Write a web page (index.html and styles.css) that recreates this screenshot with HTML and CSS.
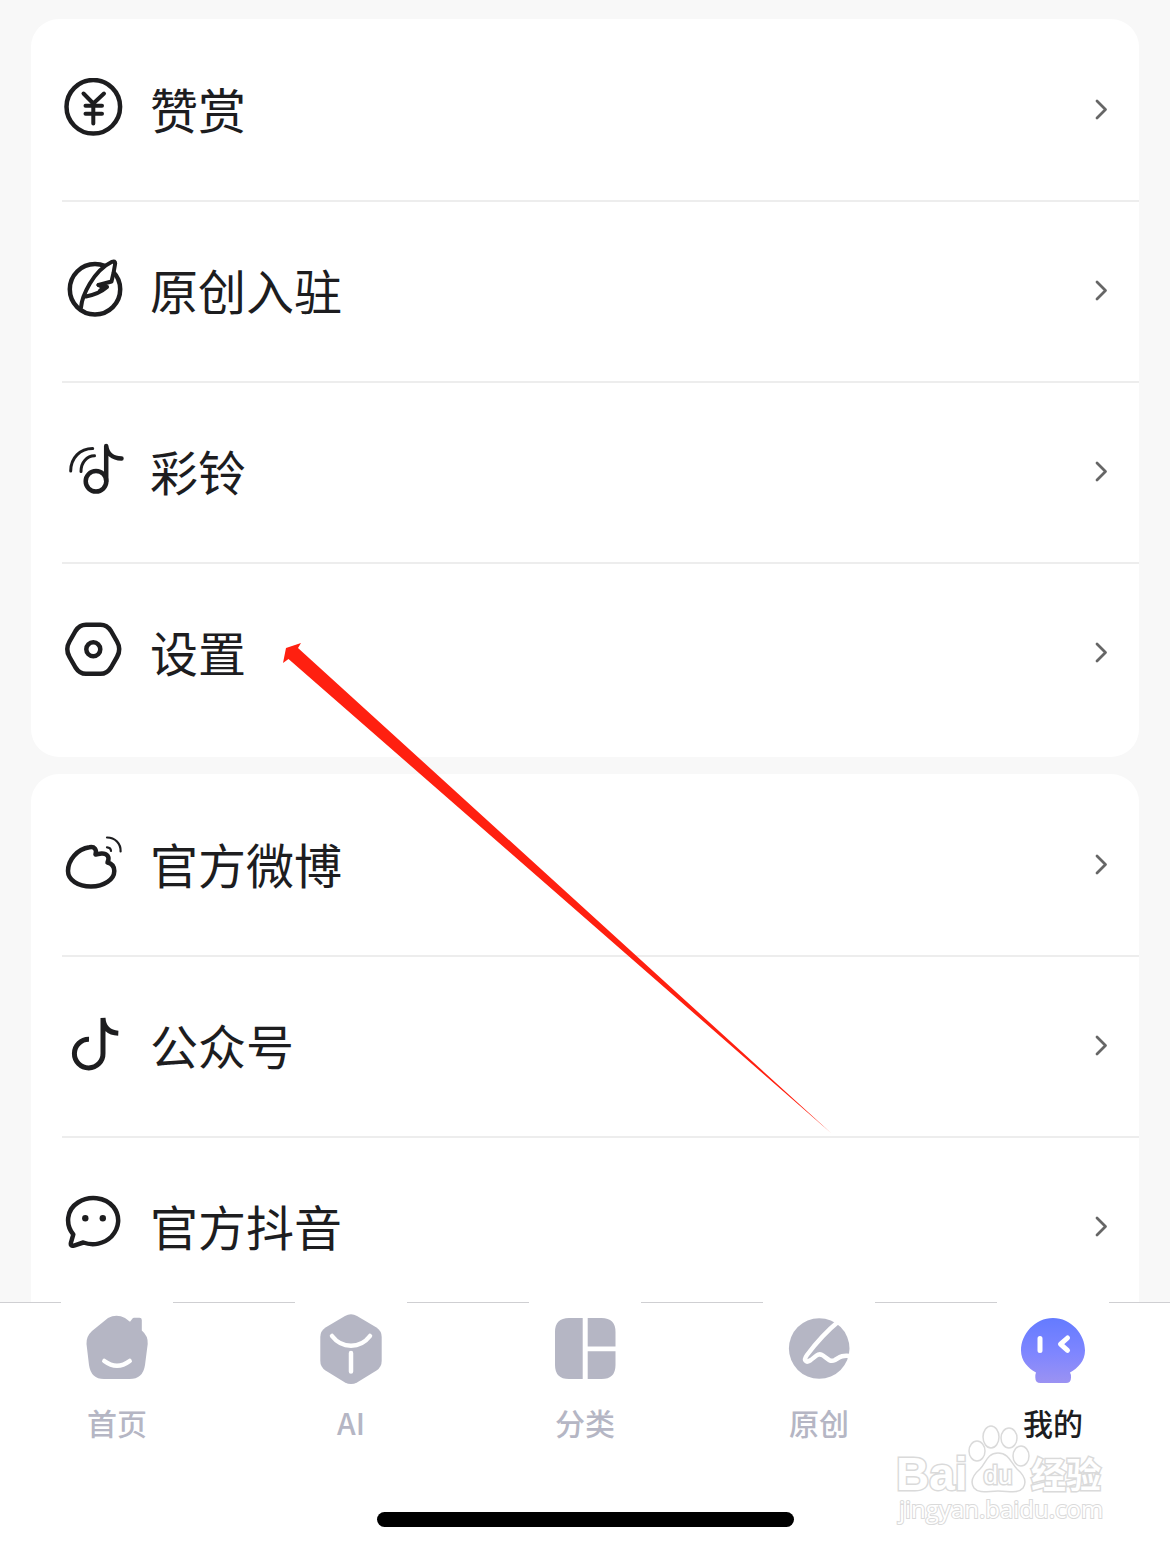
FILE: index.html
```html
<!DOCTYPE html>
<html lang="zh-CN">
<head>
<meta charset="utf-8">
<meta name="viewport" content="width=device-width, initial-scale=1">
<title>我的</title>
<link rel="stylesheet" href="styles.css">
</head>
<body>
<main class="content">
  <ul class="card">
    <li><a class="row" href="#reward">
      <svg class="row-icon" viewBox="0 0 65 65" aria-hidden="true"><circle cx="31.3" cy="28.8" r="26.8"/><path class="mid" d="M21.5 15.5 31.3 25.500 42 15.5M23.5 27.8H40M23.5 35.8H40M31.3 25.5V45.5"/></svg>
      <span class="row-label">赞赏</span>
      <svg class="chevron" viewBox="0 0 14 23" aria-hidden="true"><path d="M3 2 11.5 10.5 3 19"/></svg>
    </a></li>
    <li><a class="row" href="#creator">
      <svg class="row-icon" viewBox="0 0 65 65" aria-hidden="true"><circle cx="33" cy="30.3" r="25.2"/><path class="feather" d="M19 48.5C20 37 31 12 50 2.8Q53.2 1.5 53.2 4.5L51.5 14 49.5 22.500 36.5 26 45 28Q37 35 24 37.500"/><path class="mid" d="M36.500 26 42 28.500 38 31.500"/></svg>
      <span class="row-label">原创入驻</span>
      <svg class="chevron" viewBox="0 0 14 23" aria-hidden="true"><path d="M3 2 11.5 10.5 3 19"/></svg>
    </a></li>
    <li><a class="row" href="#ringtone">
      <svg class="row-icon" viewBox="0 0 65 65" aria-hidden="true"><circle cx="34" cy="41.3" r="10.3"/><path d="M44.2 41.3V6C45 13 50 18.3 59.5 18.5"/><path class="thin" d="M8.7 31C8.7 18 18 8.5 30.7 8.5M19 31.5C19 22 25 16 32.5 15.8"/></svg>
      <span class="row-label">彩铃</span>
      <svg class="chevron" viewBox="0 0 14 23" aria-hidden="true"><path d="M3 2 11.5 10.5 3 19"/></svg>
    </a></li>
    <li><a class="row" href="#settings">
      <svg class="row-icon" viewBox="0 0 65 65" aria-hidden="true"><path d="M24 3.800H38.500Q45 3.800 49 10L55 20.500Q59.500 28.300 55 36L49 46.500Q45 52.800 38.500 52.800H24Q17.500 52.800 13.500 46.500L7.500 36Q3 28.300 7.500 20.500L13.500 10Q17.500 3.800 24 3.800Z"/><circle cx="31.3" cy="28.3" r="7"/></svg>
      <span class="row-label">设置</span>
      <svg class="chevron" viewBox="0 0 14 23" aria-hidden="true"><path d="M3 2 11.5 10.5 3 19"/></svg>
    </a></li>
  </ul>
  <ul class="card">
    <li><a class="row" href="#weibo">
      <svg class="row-icon" viewBox="0 0 65 65" aria-hidden="true"><path d="M27.5 14.2C15 16 6 27 6 38C6 47 16 53.5 29 53.5C42 53.5 52.3 46.5 52.3 38C52.3 33 49.5 30.5 45.5 29.5C48.5 23.5 44.5 20.2 39.5 20.4Q36 20.8 33.5 21.5C35 16.5 32.5 13.2 27.5 14.2Z"/><path class="fine" d="M45 4.5C53 4.5 59 10.5 58.6 18.5M45 14.3Q48.8 14.5 49 18"/></svg>
      <span class="row-label">官方微博</span>
      <svg class="chevron" viewBox="0 0 14 23" aria-hidden="true"><path d="M3 2 11.5 10.5 3 19"/></svg>
    </a></li>
    <li><a class="row" href="#account">
      <svg class="row-icon" viewBox="0 0 65 65" aria-hidden="true"><path class="bold" d="M27 25.3A14.3 14.3 0 1 0 41 39.3V4C41.5 13 46 18.7 56.3 19.2"/></svg>
      <span class="row-label">公众号</span>
      <svg class="chevron" viewBox="0 0 14 23" aria-hidden="true"><path d="M3 2 11.5 10.5 3 19"/></svg>
    </a></li>
    <li><a class="row" href="#douyin">
      <svg class="row-icon" viewBox="0 0 65 65" aria-hidden="true"><path d="M11.3 39.5C3.5 30 4 15 16 7.5C27 .5 43 1.7 51.5 12C58.5 21 57.5 33 49.5 41.5C42 49 31 51 21.3 47.5L12 50.6Q8 51.5 9 47.5Z"/><circle class="dot" cx="23.3" cy="23.3" r="3.2"/><circle class="dot" cx="40.8" cy="23.3" r="3.2"/></svg>
      <span class="row-label">官方抖音</span>
      <svg class="chevron" viewBox="0 0 14 23" aria-hidden="true"><path d="M3 2 11.5 10.5 3 19"/></svg>
    </a></li>
  </ul>
</main>

<nav class="tabbar">
  <div class="tabs">
    <a class="tab" href="#home">
      <svg class="tab-icon" viewBox="0 0 72 72" aria-hidden="true"><path d="M27 5Q35.500 .5 44 5L49 8.700 51.500 5.500Q52 4.700 53 4.700H58.500Q60.800 4.700 60.800 7V17.500Q67.300 23 66.700 31L64 52Q62 66 48.500 66H23Q10 66 8 52L5.500 31Q5 23.500 11 18Z"/><path class="cut" d="M23.300 48Q36 57.500 48.700 48"/></svg>
      <span>首页</span>
    </a>
    <a class="tab" href="#ai">
      <svg class="tab-icon" viewBox="0 0 72 72" aria-hidden="true"><path d="M30 3Q36 -.3 42 3L61.500 14.500Q66.700 18 66.700 24V48Q66.700 54 61.500 57.500L42 69.500Q36 72.700 30 69.500L10.500 57.500Q5.300 54 5.300 48V24Q5.300 18 10.500 14.500Z"/><path class="cut" d="M17 23C27 36 45 36 55 23M36 40V58.500"/></svg>
      <span>AI</span>
    </a>
    <a class="tab" href="#category">
      <svg class="tab-icon" viewBox="0 0 72 72" aria-hidden="true"><path d="M33.700 5V66H20Q6 66 6 52V19Q6 5 20 5ZM38.700 5H52.500Q66.500 5 66.500 19V33.500H38.700ZM38.700 38.300H66.500V52Q66.500 66 52.500 66H38.700Z"/></svg>
      <span>分类</span>
    </a>
    <a class="tab" href="#original">
      <svg class="tab-icon" viewBox="0 0 72 72" aria-hidden="true"><circle cx="36.200" cy="35.500" r="30.300"/><path class="cut" d="M56 8Q39 22 24 42C20 47.500 23 50 27 47.500C32 44.500 35 39 40 42.500C45 46 47 49.500 52 47C57 44 59 42 67 43"/></svg>
      <span>原创</span>
    </a>
    <a class="tab tab-active" href="#mine" aria-current="page">
      <svg class="tab-icon" viewBox="0 0 72 72" aria-hidden="true"><defs><linearGradient id="face" x1="0" y1="0" x2="0" y2="1"><stop offset="0" stop-color="#647bff"/><stop offset=".55" stop-color="#7f86ff"/><stop offset="1" stop-color="#9b92f2"/></linearGradient></defs><path fill="url(#face)" d="M36 5C54 5 68 21 68 37.500C68 48 61 55 53 59.500Q54 61 54 64.500Q54 70 49 70H23.500Q18.300 70 18.300 64.500Q18.300 61 19 59.500C11 55 4 48 4 37.500C4 21 18 5 36 5Z"/><path class="cut wink" d="M23 25.500V37.500M50.500 25 43.500 31.200 50.500 37.300"/></svg>
      <span>我的</span>
    </a>
  </div>
  <div class="home-indicator"></div>
</nav>

<svg class="arrow" viewBox="0 0 548 492" aria-hidden="true"><path d="M3 6 18 1 15 6 548 491 5.500 17 0 21Z"/></svg>

<svg class="watermark" viewBox="0 0 220 110" role="img" aria-label="Baidu 经验">
  <text class="wm-brand" x="6" y="70">Bai</text>
  <g>
    <ellipse cx="87" cy="31" rx="8" ry="10"/><ellipse cx="101" cy="17" rx="8" ry="11"/><ellipse cx="119" cy="18" rx="8" ry="10"/><ellipse cx="131" cy="36" rx="8" ry="10"/>
    <path d="M108 33C119 33 121 43 127 49C134 55 137 62 133 68C128 74 119 71 108 71C98 71 89 74 84 68C80 62 83 55 90 49C96 43 97 33 108 33Z"/>
  </g>
  <text class="wm-du" x="108" y="64" text-anchor="middle">du</text>
  <text class="wm-cjk" x="141" y="68">经验</text>
  <text class="wm-url" x="9" y="98">jingyan.baidu.com</text>
</svg>
</body>
</html>
```
FILE: styles.css
```css
* {
  box-sizing: border-box;
}

body {
  margin: 0;
  height: 100vh;
  display: flex;
  flex-direction: column;
  position: relative;
  overflow: hidden;
  background: #f8f8f8;
  color: #1d1d1f;
  font-family: "Noto Sans CJK SC", sans-serif;
}

a {
  color: inherit;
  text-decoration: none;
}

.content {
  flex: 1;
  min-height: 0;
  overflow: hidden;
  padding: 19px 31px 0;
  display: flex;
  flex-direction: column;
  gap: 17px;
}

.card {
  flex: none;
  margin: 0;
  padding: 2px 0 12px 31px;
  list-style: none;
  background: #fff;
  border-radius: 28px;
}

.row {
  display: flex;
  align-items: center;
  height: 181px;
  padding-right: 31px;
  border-bottom: 2px solid #ededed;
}

.card li:last-child .row {
  border-bottom-color: transparent;
}

.row-icon {
  width: 65px;
  height: 65px;
  margin-right: 23px;
  fill: none;
  stroke: #1d1d1f;
  stroke-width: 4.5;
  stroke-linejoin: round;
  stroke-linecap: round;
}

.row-icon .mid {
  stroke-width: 4;
}

.row-icon .thin {
  stroke-width: 3;
}

.row-icon .fine {
  stroke-width: 2.2;
}

.row-icon .bold {
  stroke-width: 5;
  stroke-linecap: butt;
  stroke-linejoin: miter;
}

.row-icon .feather {
  fill: #fff;
  stroke-width: 4;
}

.row-icon .dot {
  fill: #1d1d1f;
  stroke: none;
}

.row-label {
  flex: 1;
  padding-bottom: 5px;
  font-size: 48px;
  line-height: 64px;
}

.chevron {
  width: 14px;
  height: 23px;
  fill: none;
  stroke: #666;
  stroke-width: 2.8;
  stroke-linecap: round;
  stroke-linejoin: round;
}

.tabbar {
  flex: none;
  background: #fff;
  border-top: 1px solid #cfcfd2;
  padding-bottom: 24px;
}

.tabs {
  display: grid;
  grid-template-columns: repeat(5, 1fr);
  justify-items: center;
  margin-top: -1px;
}

.tab {
  width: 112px;
  padding-top: 11px;
  display: flex;
  flex-direction: column;
  align-items: center;
  gap: 21px;
  background: #fff;
  color: #b5b6c4;
  font-size: 30px;
  font-weight: 500;
  line-height: 32px;
}

.tab-active {
  color: #1d1d1f;
}

.tab-icon {
  width: 72px;
  height: 72px;
  fill: #b5b6c4;
}

.tab-icon .cut {
  fill: none;
  stroke: #fff;
  stroke-width: 4.5;
  stroke-linecap: round;
  stroke-linejoin: round;
}

.tab-icon .wink {
  stroke-width: 5;
}

.home-indicator {
  width: 417px;
  max-width: 60%;
  height: 15px;
  margin: 74px auto 0;
  border-radius: 8px;
  background: #000;
}

.arrow {
  position: absolute;
  left: 283px;
  top: 642px;
  width: 548px;
  height: 492px;
  fill: #ff2010;
  pointer-events: none;
}

.watermark {
  position: absolute;
  right: 60px;
  bottom: 21px;
  width: 220px;
  height: 110px;
  fill: #fff;
  stroke: #dadada;
  stroke-width: 1.5;
  pointer-events: none;
}

.watermark text {
  paint-order: stroke;
  stroke-width: 3;
}

.watermark .wm-brand {
  font: bold 46px "Liberation Sans", sans-serif;
}

.watermark .wm-du {
  font: 26px "Liberation Sans", sans-serif;
}

.watermark .wm-cjk {
  font: bold 35px "Noto Sans CJK SC", sans-serif;
}

.watermark .wm-url {
  font: 24px "Open Sans", sans-serif;
  stroke-width: 2;
}
```
